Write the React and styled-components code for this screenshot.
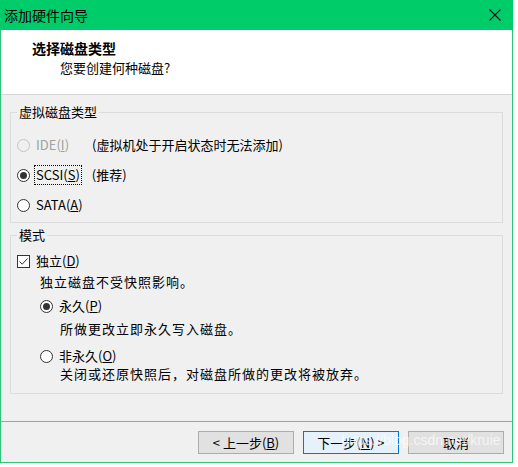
import React from 'react';
import styled, { createGlobalStyle } from 'styled-components';

const GlobalStyle = createGlobalStyle`
  html, body {
    margin: 0;
    padding: 0;
    background: #ffffff;
  }
  body {
    font-family: "Noto Sans CJK SC", "Noto Sans", "Liberation Sans", sans-serif;
    font-size: 13px;
    color: #000;
  }
`;

const Window = styled.div`
  position: relative;
  width: 513px;
  height: 463px;
  box-sizing: border-box;
  border: 1px solid #2fc576;
  border-top: none;
  background: #f0f0f0;
  display: flex;
  flex-direction: column;
`;

const TitleBar = styled.div`
  height: 30px;
  margin: 0 -1px;
  background: #00cc6a;
  display: flex;
  align-items: center;
  justify-content: space-between;
  padding: 0 12px 0 4px;
  flex-shrink: 0;
`;

const TitleText = styled.span`
  font-size: 14px;
  line-height: 18px;
  color: #000;
`;

const CloseIcon = () => (
  <svg width="12" height="12" viewBox="0 0 12 12">
    <path d="M0.5 0.5 L11.5 11.5 M11.5 0.5 L0.5 11.5" stroke="#1a1a1a" strokeWidth="1.1" />
  </svg>
);

const Header = styled.div`
  background: #ffffff;
  height: 65px;
  border-bottom: 1px solid #d5d5d5;
  padding: 9px 0 0 31px;
  box-sizing: border-box;
  flex-shrink: 0;
`;

const HeaderTitle = styled.div`
  font-weight: bold;
  font-size: 14px;
  line-height: 18px;
`;

const HeaderSub = styled.div`
  margin: 2px 0 0 28px;
  font-size: 13px;
  line-height: 18px;
`;

const Body = styled.div`
  flex: 1;
  padding: 9px 9px 0 9px;
`;

const Group = styled.fieldset`
  margin: ${p => p.$top || 0}px 0 0 0;
  padding: ${p => p.$padTop}px 0 ${p => p.$padBottom}px 6px;
  border: 1px solid #dcdcdc;
  min-width: 0;
`;

const Legend = styled.legend`
  padding: 0 2px;
  font-size: 13px;
  line-height: 16px;
`;

const Row = styled.div`
  display: flex;
  align-items: center;
  height: ${p => p.$h || 20}px;
  margin-left: ${p => p.$indent || 0}px;
  margin-top: ${p => p.$mt || 0}px;
  line-height: 18px;
  white-space: nowrap;
  color: ${p => (p.$disabled ? '#a0a0a0' : '#000')};
`;

const Radio = styled.span`
  position: relative;
  width: 13px;
  height: 13px;
  box-sizing: border-box;
  border-radius: 50%;
  border: 1px solid ${p => (p.$disabled ? '#c4c4c4' : '#333')};
  background: ${p => (p.$disabled ? '#f0f0f0' : '#fff')};
  flex-shrink: 0;
  &::after {
    content: '';
    display: ${p => (p.$checked ? 'block' : 'none')};
    position: absolute;
    left: 2px;
    top: 2px;
    width: 7px;
    height: 7px;
    border-radius: 50%;
    background: #333;
  }
`;

const CheckBox = styled.span`
  width: 13px;
  height: 13px;
  box-sizing: border-box;
  border: 1px solid #333;
  background: #fff;
  display: flex;
  align-items: center;
  justify-content: center;
  flex-shrink: 0;
`;

const Label = styled.span`
  margin-left: 4px;
  padding: 0 1px;
  border: 1px ${p => (p.$focus ? 'dotted #000' : 'solid transparent')};
  line-height: 18px;
`;

const Note = styled.span`
  margin-left: ${p => p.$gap}px;
  color: #000;
`;

const Desc = styled.div`
  margin-left: ${p => p.$indent}px;
  margin-top: ${p => p.$mt || 0}px;
  height: 20px;
  line-height: 20px;
  letter-spacing: 1px;
  white-space: nowrap;
`;

const Footer = styled.div`
  flex-shrink: 0;
  height: 41px;
  box-sizing: border-box;
  border-top: 1px solid #a0a0a0;
  padding: 9px 8px 0 0;
  display: flex;
  justify-content: flex-end;
  gap: 9px;
`;

const Button = styled.button`
  width: 96px;
  height: 23px;
  box-sizing: border-box;
  margin: 0;
  padding: 0;
  font-family: inherit;
  font-size: 13px;
  line-height: 18px;
  color: #000;
  border: 1px solid ${p => (p.$primary ? '#0078d7' : '#adadad')};
  background: ${p => (p.$primary ? '#e5f1fb' : '#e1e1e1')};
`;

const Watermark = styled.span`
  position: absolute;
  left: 340px;
  top: 432px;
  font-family: "Liberation Sans", Arial, sans-serif;
  font-size: 14px;
  color: rgba(255, 255, 255, 0.7);
  pointer-events: none;
  white-space: nowrap;
`;

const Check = () => (
  <svg width="11" height="11" viewBox="0 0 11 11">
    <path d="M1.5 5.5 L4.2 8.2 L9.5 2.5" fill="none" stroke="#333" strokeWidth="1" />
  </svg>
);

export default function App() {
  return (
    <>
      <GlobalStyle />
      <Window>
        <TitleBar>
          <TitleText>添加硬件向导</TitleText>
          <CloseIcon />
        </TitleBar>
        <Header>
          <HeaderTitle>选择磁盘类型</HeaderTitle>
          <HeaderSub>您要创建何种磁盘?</HeaderSub>
        </Header>
        <Body>
          <Group $padTop={10} $padBottom={2}>
            <Legend>虚拟磁盘类型</Legend>
            <Row $h={30} $disabled>
              <Radio $disabled />
              <Label>IDE(<u>I</u>)</Label>
              <Note $gap={21}>(虚拟机处于开启状态时无法添加)</Note>
            </Row>
            <Row $h={30}>
              <Radio $checked />
              <Label $focus>SCSI(<u>S</u>)</Label>
              <Note $gap={10}>(推荐)</Note>
            </Row>
            <Row $h={30}>
              <Radio />
              <Label>SATA(<u>A</u>)</Label>
            </Row>
          </Group>
          <Group $top={4} $padTop={8} $padBottom={9}>
            <Legend>模式</Legend>
            <Row>
              <CheckBox><Check /></CheckBox>
              <Label>独立(<u>D</u>)</Label>
            </Row>
            <Desc $indent={23} $mt={1}>独立磁盘不受快照影响。</Desc>
            <Row $indent={23} $mt={4}>
              <Radio $checked />
              <Label>永久(<u>P</u>)</Label>
            </Row>
            <Desc $indent={43} $mt={3}>所做更改立即永久写入磁盘。</Desc>
            <Row $indent={23} $mt={7}>
              <Radio />
              <Label>非永久(<u>O</u>)</Label>
            </Row>
            <Desc $indent={43} $mt={-2}>关闭或还原快照后，对磁盘所做的更改将被放弃。</Desc>
          </Group>
        </Body>
        <Footer>
          <Button>&lt; 上一步(<u>B</u>)</Button>
          <Button $primary>下一步(<u>N</u>) &gt;</Button>
          <Button>取消</Button>
        </Footer>
        <Watermark>https://blog.csdn.net/kruie</Watermark>
      </Window>
    </>
  );
}
